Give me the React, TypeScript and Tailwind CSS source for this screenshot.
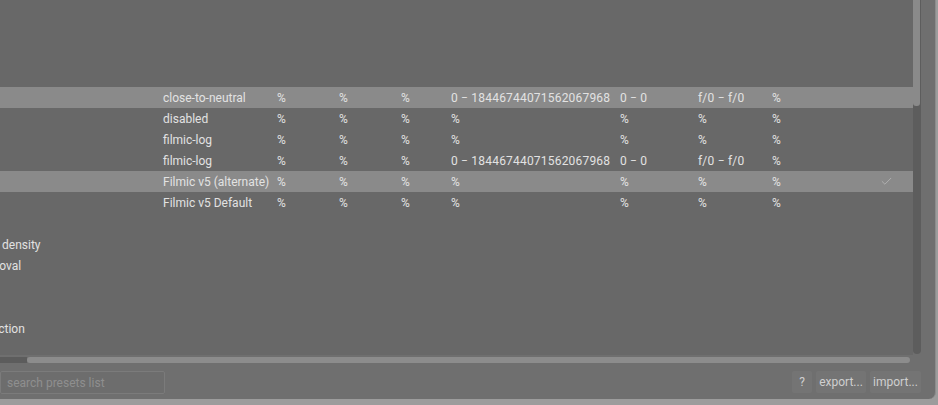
import { Check } from 'lucide-react';

type Preset = {
	name: string;
	cols: string[];
	active?: boolean;
	checked?: boolean;
};

const presets: Preset[] = [
	{ name: 'close-to-neutral', cols: ['%', '%', '%', '0 − 18446744071562067968', '0 − 0', 'f/0 − f/0', '%'], active: true },
	{ name: 'disabled', cols: ['%', '%', '%', '%', '%', '%', '%'] },
	{ name: 'filmic-log', cols: ['%', '%', '%', '%', '%', '%', '%'] },
	{ name: 'filmic-log', cols: ['%', '%', '%', '0 − 18446744071562067968', '0 − 0', 'f/0 − f/0', '%'] },
	{ name: 'Filmic v5 (alternate)', cols: ['%', '%', '%', '%', '%', '%', '%'], active: true, checked: true },
	{ name: 'Filmic v5 Default', cols: ['%', '%', '%', '%', '%', '%', '%'] },
];

// module names sit in the tree column, scrolled partly out of view on the left
const modules: { name: string; shift: string }[] = [
	{ name: '', shift: '' },
	{ name: 'graduated density', shift: '-ml-[55px]' },
	{ name: 'haze removal', shift: '-ml-[50px]' },
	{ name: '', shift: '' },
	{ name: '', shift: '' },
	{ name: 'perspective correction', shift: '-ml-[94px]' },
];

const grid = 'grid grid-cols-[163px_114px_62px_62px_50px_169px_78px_74px_108px_1fr]';

function PresetRow({ preset }: { preset: Preset }) {
	return (
		<div className={`${grid} h-[21px] items-center ${preset.active ? 'bg-[#8a8a8a]' : ''}`}>
			<span />
			<span className="whitespace-nowrap">{preset.name}</span>
			{preset.cols.map((c, i) => (
				<span key={i} className="whitespace-nowrap tracking-[0.2px]">
					{c}
				</span>
			))}
			<span className="flex items-center">
				{preset.checked && <Check className="h-[13px] w-[13px] text-[#b4b4b4]" strokeWidth={1.6} />}
			</span>
		</div>
	);
}

export default function App() {
	return (
		<div
			className="relative h-[405px] w-[938px] overflow-hidden bg-[#9c9c9c] text-[12px] text-[#e2e2e2]"
			style={{ fontFamily: 'Roboto, "Noto Sans", sans-serif' }}
		>
			<div className="flex h-[399px] w-[936px] flex-col rounded-br-[7px] border-r border-[#8c8c8c] bg-[#6f6f6f]">
				<div className="flex h-[364px]">
					<div className="flex w-[913px] flex-col">
						<div className="h-[355px] overflow-hidden bg-[#686868] pt-[87px]">
							{presets.map((p, i) => (
								<PresetRow key={i} preset={p} />
							))}
							{modules.map((m, i) => (
								<div key={i} className="flex h-[21px] items-center overflow-hidden whitespace-nowrap">
									<span className={m.shift}>{m.name}</span>
								</div>
							))}
						</div>
						<div className="flex h-[9px] items-start">
							<div className="mt-[2px] h-[6px] w-[27px] bg-[#5c5c5c]" />
							<div className="mt-[2px] h-[6px] w-[883px] rounded-full bg-[#8c8c8c]" />
						</div>
					</div>
					<div className="flex h-[354px] w-[8px] flex-col rounded-b-[4px] bg-[#5d5d5d]">
						<div className="h-[106px] w-[7px] rounded-b-[3px] bg-[#8a8a8a]" />
					</div>
				</div>
				<div className="flex flex-1 items-start justify-between pt-[7px] pr-[14px]">
					<div className="flex h-[23px] w-[165px] items-center rounded-[2px] border border-[#7b7b7b] bg-[#6d6d6d] pl-[6px] text-[#8f8f8f]">
						search presets list
					</div>
					<div className="flex gap-[4px] text-[#cfcfcf]">
						<button className="h-[22px] w-[20px] rounded-[2px] bg-[#747474]">?</button>
						<button className="h-[22px] w-[50px] rounded-[2px] bg-[#747474]">export...</button>
						<button className="h-[22px] w-[51px] rounded-[2px] bg-[#747474]">import...</button>
					</div>
				</div>
			</div>
		</div>
	);
}
